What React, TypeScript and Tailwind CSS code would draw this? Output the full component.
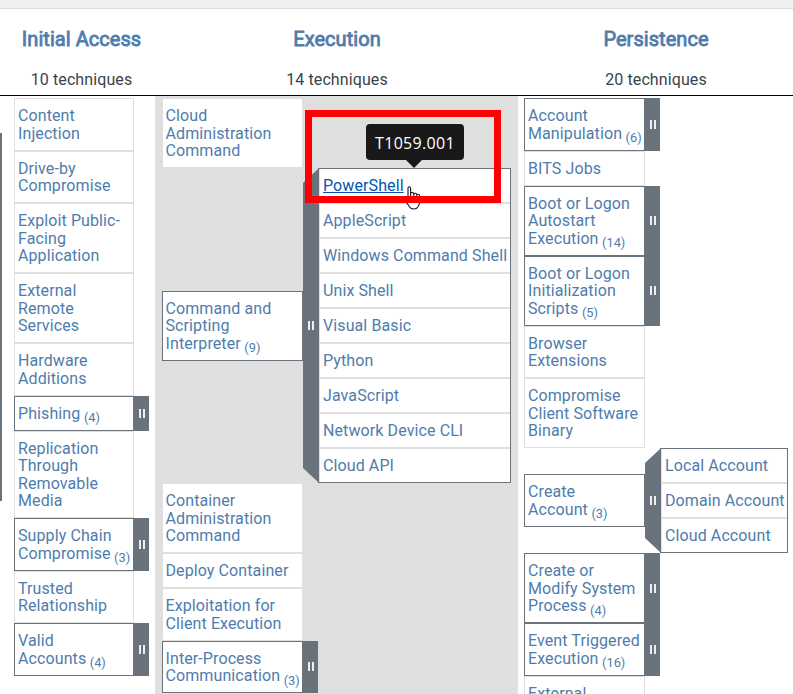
import React from "react";

type Technique = { lines: string[]; count?: number; subs?: string[] };
type Tactic = {
  name: string;
  total: string;
  techniques: Technique[];
  shaded?: boolean;
  cell: string;
  panel?: string;
};

const tactics: Tactic[] = [
  {
    name: "Initial Access",
    total: "10 techniques",
    cell: "w-[120px] pl-[3px]",
    techniques: [
      { lines: ["Content", "Injection"] },
      { lines: ["Drive-by", "Compromise"] },
      { lines: ["Exploit Public-", "Facing", "Application"] },
      { lines: ["External", "Remote", "Services"] },
      { lines: ["Hardware", "Additions"] },
      { lines: ["Phishing"], count: 4 },
      { lines: ["Replication", "Through", "Removable", "Media"] },
      { lines: ["Supply Chain", "Compromise"], count: 3 },
      { lines: ["Trusted", "Relationship"] },
      { lines: ["Valid", "Accounts"], count: 4 },
    ],
  },
  {
    name: "Execution",
    total: "14 techniques",
    shaded: true,
    cell: "w-[141px] pl-[2.5px]",
    panel: "w-[193px]",
    techniques: [
      { lines: ["Cloud", "Administration", "Command"] },
      {
        lines: ["Command and", "Scripting", "Interpreter"],
        count: 9,
        subs: [
          "PowerShell",
          "AppleScript",
          "Windows Command Shell",
          "Unix Shell",
          "Visual Basic",
          "Python",
          "JavaScript",
          "Network Device CLI",
          "Cloud API",
        ],
      },
      { lines: ["Container", "Administration", "Command"] },
      { lines: ["Deploy Container"] },
      { lines: ["Exploitation for", "Client Execution"] },
      { lines: ["Inter-Process", "Communication"], count: 3 },
    ],
  },
  {
    name: "Persistence",
    total: "20 techniques",
    cell: "w-[121px] pl-[3px]",
    panel: "w-[128px]",
    techniques: [
      { lines: ["Account", "Manipulation"], count: 6 },
      { lines: ["BITS Jobs"] },
      { lines: ["Boot or Logon", "Autostart", "Execution"], count: 14 },
      { lines: ["Boot or Logon", "Initialization", "Scripts"], count: 5 },
      { lines: ["Browser", "Extensions"] },
      { lines: ["Compromise", "Client Software", "Binary"] },
      {
        lines: ["Create", "Account"],
        count: 3,
        subs: ["Local Account", "Domain Account", "Cloud Account"],
      },
      { lines: ["Create or", "Modify System", "Process"], count: 4 },
      { lines: ["Event Triggered", "Execution"], count: 16 },
      { lines: ["External"] },
    ],
  },
];

function Handle({ open }: { open?: boolean }) {
  return (
    <div
      className={`flex w-4 shrink-0 items-center gap-[2px] self-stretch bg-[#6a737b] ${
        open
          ? "pl-[5px] [clip-path:polygon(0_15px,100%_0,100%_100%,0_calc(100%-15px))]"
          : "-ml-px pl-[6px]"
      }`}
    >
      <span className="h-[9px] w-[2px] bg-[#eceef0]" />
      <span className="h-[9px] w-[2px] bg-[#eceef0]" />
    </div>
  );
}

function Cell({ technique, width }: { technique: Technique; width: string }) {
  const { lines, count } = technique;
  return (
    <div
      className={`shrink-0 border bg-white pt-[8.125px] pb-[7.375px] ${width} ${
        count ? "border-[#6a737b]" : "border-[#dfdfdf]"
      }`}
    >
      {lines.map((line, i) => (
        <div key={line} className="h-[17.5px] whitespace-nowrap">
          {line}
          {count && i === lines.length - 1 && (
            <sub className="bottom-[-3.6px] ml-[3.5px] align-baseline text-[12.8px] leading-none tracking-normal">
              ({count})
            </sub>
          )}
        </div>
      ))}
    </div>
  );
}

function Row({ technique, tactic }: { technique: Technique; tactic: Tactic }) {
  const { subs, count } = technique;
  return (
    <div className="flex items-center">
      <Cell technique={technique} width={tactic.cell} />
      {count && <Handle open={!!subs} />}
      {subs && (
        <div className={`-ml-px shrink-0 border border-[#6a737b] bg-white ${tactic.panel}`}>
          {subs.map((s, i) => (
            <div
              key={s}
              className={`flex items-center whitespace-nowrap border-l border-[#dfdfdf] pl-[3px] ${
                i === 0 || i === subs.length - 1 ? "h-[34px]" : "h-[35px]"
              } ${i > 0 ? "border-t" : ""} ${i < subs.length - 1 ? "border-b" : ""}`}
            >
              {s === "PowerShell" ? (
                <a className="text-[#0156b3] underline">{s}</a>
              ) : (
                s
              )}
            </div>
          ))}
        </div>
      )}
    </div>
  );
}

export default function App() {
  return (
    <div className="relative h-[694px] w-[793px] overflow-hidden bg-white font-['Roboto',sans-serif] text-base leading-[17.5px] tracking-[0.1px] text-[#4f7cac]">
      <div className="h-[9px] border-b border-[#dcdcdc] bg-[#f0f0f0]" />
      <header className="grid h-[87px] grid-cols-[149px_362px_276px] border-b border-black pl-[7px] text-center">
        {tactics.map((t) => (
          <div key={t.name}>
            <h2 className="pt-[18px] text-xl font-normal leading-6 tracking-[0.05px] [-webkit-text-stroke:0.8px_#4f7cac]">
              {t.name}
            </h2>
            <p className="pt-[20px] leading-[18px] text-[#39434c]">{t.total}</p>
          </div>
        ))}
      </header>
      <main className="grid h-[598px] grid-cols-[148px_363px_276px] pl-[7px]">
        {tactics.map((t) => (
          <section
            key={t.name}
            className={`min-w-0 pt-[2px] ${
              t.shaded ? "bg-[#dfdfdf] pl-[7px]" : t.panel ? "pl-[6px]" : "pl-[7px]"
            }`}
          >
            {t.techniques.map((q) => (
              <Row key={q.lines.join(" ")} technique={q} tactic={t} />
            ))}
          </section>
        ))}
      </main>

      <div className="absolute left-0 top-[133px] h-[368px] w-[2px] bg-[#6a737b]" />

      <div className="absolute left-[366px] top-[124px] flex h-[36px] w-[98px] items-center justify-center rounded-[4px] bg-[#191919] pt-px font-['Open_Sans',sans-serif] text-base tracking-[0.3px] text-white">
        T1059.001
      </div>
      <div className="absolute left-[406px] top-[160px] h-[8px] w-[16px] bg-[#191919] [clip-path:polygon(0_0,100%_0,50%_100%)]" />

      <svg className="absolute left-[403px] top-[185px]" width="20" height="26" viewBox="0 0 20 26">
        <path
          d="M5 14.5V3.2C5 1.2 7.6 1.2 7.6 3.2V8.5C8.3 7 10.8 7.2 10.8 9C11.5 7.8 13.8 8 13.8 9.8C14.4 8.8 16.6 9 16.6 11V17C16.6 19.5 15.6 20.5 15 21.8C13.2 24.8 8.2 24.8 6.4 21.8C5.2 19.5 3.5 18 2.3 15.5C1.3 13.5 3.2 12.5 5 14.5ZM7.6 8.5V13M10.8 9V13M13.8 9.8V13.5"
          fill="white"
          stroke="#16162a"
          strokeWidth="1.1"
        />
      </svg>
      <div className="absolute left-[305px] top-[110px] h-[93px] w-[196px] border-[7px] border-[#ff0000]" />
    </div>
  );
}
